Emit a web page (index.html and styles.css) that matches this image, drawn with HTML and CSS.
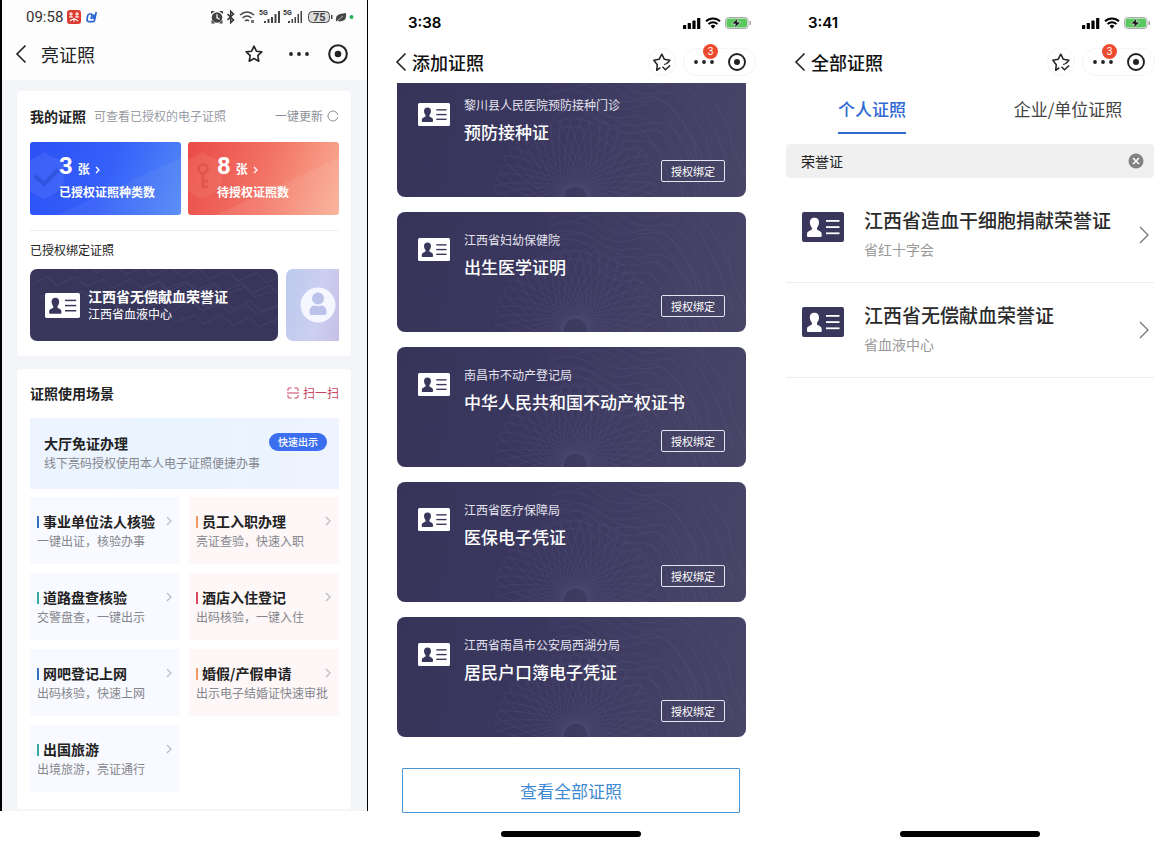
FILE: index.html
```html
<!DOCTYPE html>
<html lang="zh-CN">
<head>
<meta charset="utf-8">
<meta name="viewport" content="width=device-width, initial-scale=1">
<title>电子证照</title>
<link rel="stylesheet" href="styles.css">
</head>
<body>
<svg class="defs" aria-hidden="true">
  <symbol id="back" viewBox="0 0 12 20"><path d="M10.500 1.500 2 10l8.500 8.500" fill="none" stroke="currentColor" stroke-width="1.600"/></symbol>
  <symbol id="next" viewBox="0 0 10 18"><path d="m1 1 8 8-8 8" fill="none" stroke="currentColor" stroke-width="1.300"/></symbol>
  <symbol id="more" viewBox="0 0 6 10"><path d="m1 1 4 4-4 4" fill="none" stroke="currentColor" stroke-width="1.500"/></symbol>
  <symbol id="star" viewBox="0 0 20 20"><path d="m10 2.200 2.400 5 5.400.700-4 3.800 1 5.500-4.800-2.700-4.800 2.700 1-5.500-4-3.800 5.400-.700z" fill="none" stroke="currentColor" stroke-width="1.600" stroke-linejoin="round"/></symbol>
  <symbol id="star-check" viewBox="0 0 20 20"><path d="M8.300 15.600l-3.600 2.700.600-5.600L1.800 8.300l5.300-1L9.800 2.200l2.600 5.100 5.500 1-3 3.200" fill="none" stroke="currentColor" stroke-width="1.500" stroke-linejoin="round"/><path d="m10.500 14.800 3 3 4.600-4.300" fill="none" stroke="currentColor" stroke-width="1.500"/><path d="m12 12.500 3-1" fill="none" stroke="currentColor" stroke-width="1.200"/></symbol>
  <symbol id="dots" viewBox="0 0 20 6"><circle cx="2" cy="3" r="1.900"/><circle cx="10" cy="3" r="1.900"/><circle cx="18" cy="3" r="1.900"/></symbol>
  <symbol id="target" viewBox="0 0 20 20"><circle cx="10" cy="10" r="8" fill="none" stroke="currentColor" stroke-width="1.900"/><circle cx="10" cy="10" r="3"/></symbol>
  <symbol id="bars" viewBox="0 0 18 12"><rect x="0" y="8" width="3.200" height="4" rx=".6"/><rect x="4.700" y="6" width="3.200" height="6" rx=".6"/><rect x="9.400" y="3.500" width="3.200" height="8.500" rx=".6"/><rect x="14.100" y="1" width="3.200" height="11" rx=".6"/></symbol>
  <symbol id="wifi" viewBox="0 0 16 12"><g fill="none" stroke="currentColor" stroke-width="1.900"><path d="M1 4.300a10 10 0 0 1 14 0M3.500 7.100a6.500 6.500 0 0 1 9 0"/></g><path d="M5.600 9a3.500 3.500 0 0 1 4.800 0L8 11.800z"/></symbol>
  <symbol id="charge" viewBox="0 0 26 12"><rect x=".5" y=".5" width="22.500" height="11" rx="3" fill="#fff" stroke="#a8a8a8"/><rect x="1.500" y="1.500" width="20.500" height="9" rx="2" fill="#5bc75f"/><path d="M24.500 4v4a2 2 0 0 0 0-4z" fill="#9c9c9c"/><path d="M13 .8 6.700 6.900h3.700L9.300 11.200l6.500-6.100h-3.700z" fill="#111" stroke="#fff" stroke-width=".6"/></symbol>
  <symbol id="idcard" viewBox="0 0 42 30"><path fill="currentColor" d="M2 0h38q2 0 2 2v26q0 2-2 2H2q-2 0-2-2V2q0-2 2-2z"/><g><path d="M12.500 5.800c3 0 4.700 2 4.500 4.900-.1 2-.9 3.800-2 5v1.900c1.600 1.200 4.700 1.600 4.700 4.600V24q0 1-1 1H6q-1 0-1-1v-1.800c0-3 3.300-3.400 4.900-4.600v-1.900c-1.100-1.200-1.900-3-2-5-.2-2.900 1.600-4.900 4.600-4.900z"/><rect x="24" y="8" width="13.500" height="1.800"/><rect x="24" y="14.200" width="13.500" height="1.800"/><rect x="24" y="20.400" width="13.500" height="1.800"/></g></symbol>
  <symbol id="weave" viewBox="0 0 348 120" preserveAspectRatio="xMaxYMid slice">
    <g fill="none" stroke="#8f8cc0" stroke-width=".6" opacity=".15">
      <g id="petals"><ellipse cx="178" cy="118" rx="82" ry="12"/><ellipse cx="178" cy="118" rx="82" ry="12" transform="rotate(15 178 118)"/><ellipse cx="178" cy="118" rx="82" ry="12" transform="rotate(30 178 118)"/><ellipse cx="178" cy="118" rx="82" ry="12" transform="rotate(45 178 118)"/><ellipse cx="178" cy="118" rx="82" ry="12" transform="rotate(60 178 118)"/><ellipse cx="178" cy="118" rx="82" ry="12" transform="rotate(75 178 118)"/></g>
      <use href="#petals" transform="rotate(90 178 118)"/>
      <use href="#petals" transform="rotate(7 178 118)"/>
      <use href="#petals" transform="rotate(97 178 118)"/>
      <g id="waves"><path d="M150 8q25-14 48 3t44 8 42 22 20 38 16 42"/><path d="M150 16q25-14 46 3t42 8 38 22 18 36 14 40"/><path d="M150 24q23-12 44 3t38 10 34 20 16 34 14 36"/><path d="M150 32q23-12 42 3t34 10 30 20 14 32 12 30"/></g>
      <use href="#waves" transform="translate(28 -24)"/>
      <use href="#waves" transform="translate(10 8) rotate(4)"/>
    </g>
  </symbol>
  <symbol id="zigzag" viewBox="0 0 248 72" preserveAspectRatio="xMaxYMid slice">
    <g fill="none" stroke="#5c5a85" stroke-width="1" opacity=".3">
      <g id="zz"><path d="M4 14l14-6 8 8 20-8 10 9 18-7 9 9 18-9 12 10 16-8 10 10 18-8 11 10 18-8 10 10 18-8 11 10 18-6"/></g>
      <use href="#zz" transform="translate(6 14)"/><use href="#zz" transform="translate(60 22)"/><use href="#zz" transform="translate(90 36)"/><use href="#zz" transform="translate(40 -12)"/><use href="#zz" transform="translate(110 4)"/>
    </g>
  </symbol>
</svg>

<main class="screens">
  <section class="phone phone-wallet">
    <header class="top">
      <div class="status">
        <span class="clock">09:58</span>
        <svg class="status-app" viewBox="0 0 14 14"><rect width="14" height="14" rx="3" fill="#dc3b30"/><g fill="none" stroke="#fff" stroke-width="1.100"><path d="M2 4h4M4 2v5M2 7h4M8 4h4M10 2v5M8 7h4M3 11q4-4 8 0M7 8v4"/></g></svg>
        <svg class="status-app" viewBox="0 0 14 14"><path d="M7 4H4.500Q3 4 2.600 6L2 10q0 1.600 1.500 1.600H8q1.300 0 1.600-1.500L11.200 2M7.200 4 6 9M9 4.500 8 9" fill="none" stroke="#2a66cf" stroke-width="1.700"/></svg>
        <svg class="status-icons" viewBox="0 0 145 18">
          <g fill="#444"><circle cx="7" cy="9.500" r="5.300"/><path d="M1 6V3h4zM13 6V3H9zM1.500 15.500V12l3.500 3.500zM12.500 15.500V12L9 15.500z"/></g>
          <path d="M7 6.200v3.600l2.600 1.400" stroke="#fff" stroke-width="1.300" fill="none"/>
          <path d="m17.500 6 6 6-2.800 2.700V3.300L23.500 6l-6 6" fill="none" stroke="#333" stroke-width="1.500"/>
          <g fill="none" stroke="#444" stroke-width="1.500"><path d="M30 7q7-6 14 0M32.500 10q4.500-4 9 0M35 13q2-2 4 0"/></g><path d="M41 12v3h3v-3z" fill="#777"/>
          <text x="49" y="7" class="net">5G</text>
          <g fill="#444"><path d="M54 13h2v2h-2zM57.500 11h2v4h-2zM61 9h2v6h-2zM64.500 6h2v9h-2zM68 3h2v12h-2z"/></g>
          <text x="73" y="7" class="net">5G</text>
          <g fill="#444"><path d="M78 13h2v2h-2zM81.500 11h1.500v4h-1.500zM84.500 9H86v6h-1.500zM87.500 6H89v9h-1.500zM90.500 3H92v12h-1.500z"/></g>
          <rect x="98.500" y="3.500" width="21" height="11" rx="4" fill="#ddd" stroke="#444"/><path d="M121 7h1.500v4H121z" fill="#444"/>
          <text x="103" y="13" class="level">75</text>
          <path d="M126 14q-1-7 4-8l6-1q1 7-4 8-3 1-4.500-.5z" fill="#444"/><path d="m126 14 7-6" stroke="#ddd" stroke-width=".8"/>
          <circle cx="141.500" cy="9" r="2" fill="#25b35a"/>
        </svg>
      </div>
      <div class="nav">
        <button class="icon-btn" aria-label="返回"><svg class="i-back"><use href="#back"/></svg></button>
        <h1>亮证照</h1>
        <button class="icon-btn round" aria-label="收藏"><svg class="i-20"><use href="#star"/></svg></button>
        <div class="capsule">
          <button class="icon-btn" aria-label="更多"><svg class="i-dots"><use href="#dots"/></svg></button>
          <button class="icon-btn" aria-label="关闭"><svg class="i-target"><use href="#target"/></svg></button>
        </div>
      </div>
    </header>
    <div class="wallet">
      <section class="panel">
        <div class="panel-head">
          <h2>我的证照</h2><p>可查看已授权的电子证照</p>
          <button class="refresh">一键更新<svg viewBox="0 0 12 12"><path d="M10.800 7A5 5 0 1 1 10.800 5" fill="none" stroke="currentColor"/></svg></button>
        </div>
        <div class="stats">
          <a class="stat stat-blue" href="#">
            <svg class="stat-mark" viewBox="0 0 40 50"><path d="M14 1q12 8 20 8v19q0 12-20 20Q-6 40-6 28V9q12 0 20-8z" fill="#5b7cf8" opacity=".35"/><path d="m5 25 9 8 14-14" fill="none" stroke="#2443c9" stroke-width="4" opacity=".5"/></svg>
            <span class="stat-num"><b>3</b>张<svg viewBox="0 0 6 8"><path d="m1 1 3 3-3 3" fill="none" stroke="currentColor" stroke-width="1.300"/></svg></span>
            <span class="stat-label">已授权证照种类数</span>
          </a>
          <a class="stat stat-red" href="#">
            <svg class="stat-mark" viewBox="0 0 40 50"><path d="M14 1q12 8 20 8v19q0 12-20 20Q-6 40-6 28V9q12 0 20-8z" fill="#f58a76" opacity=".25"/><g fill="none" stroke="#c73b36" stroke-width="2.500" opacity=".35"><circle cx="15" cy="18" r="4.500"/><path d="M15 23v14M15 30h5M15 36h5"/></g></svg>
            <span class="stat-num"><b>8</b>张<svg viewBox="0 0 6 8"><path d="m1 1 3 3-3 3" fill="none" stroke="currentColor" stroke-width="1.300"/></svg></span>
            <span class="stat-label">待授权证照数</span>
          </a>
        </div>
        <h3 class="bound-title">已授权绑定证照</h3>
        <div class="bound">
          <a class="bound-card" href="#">
            <svg class="pattern"><use href="#zigzag"/></svg>
            <svg class="i-id-m on-dark" viewBox="0 0 42 30"><use href="#idcard"/></svg>
            <span class="bound-text"><strong>江西省无偿献血荣誉证</strong><span>江西省血液中心</span></span>
          </a>
          <a class="bound-next" href="#" aria-label="下一张证照">
            <svg viewBox="0 0 36 36"><circle cx="18" cy="18" r="17.500" fill="#f5f6ff"/><g fill="#bcc3ea"><circle cx="18" cy="11.500" r="6"/><path d="M9.500 25q0-6.500 5.500-6.500 3 1.500 6 0 5.500 0 5.500 6.500v1q0 2-2 2h-13q-2 0-2-2z"/></g></svg>
          </a>
        </div>
      </section>
      <section class="panel panel-scenes">
        <div class="panel-head">
          <h2>证照使用场景</h2>
          <button class="scan"><svg viewBox="0 0 12 12"><path d="M1 4V2q0-1 1-1h2.500M7.500 1H10q1 0 1 1v2M1 8v2q0 1 1 1h2.500M7.500 11H10q1 0 1-1V8M0 6h12" fill="none" stroke="currentColor"/></svg>扫一扫</button>
        </div>
        <div class="hall">
          <div><h3>大厅免证办理</h3><p>线下亮码授权使用本人电子证照便捷办事</p></div>
          <button>快速出示</button>
        </div>
        <div class="scenes">
          <a class="scene blue" href="#"><h3>事业单位法人核验</h3><svg><use href="#more"/></svg><p>一键出证，核验办事</p></a>
          <a class="scene orange" href="#"><h3>员工入职办理</h3><svg><use href="#more"/></svg><p>亮证查验，快速入职</p></a>
          <a class="scene teal" href="#"><h3>道路盘查核验</h3><svg><use href="#more"/></svg><p>交警盘查，一键出示</p></a>
          <a class="scene red" href="#"><h3>酒店入住登记</h3><svg><use href="#more"/></svg><p>出码核验，一键入住</p></a>
          <a class="scene blue" href="#"><h3>网吧登记上网</h3><svg><use href="#more"/></svg><p>出码核验，快速上网</p></a>
          <a class="scene orange" href="#"><h3>婚假/产假申请</h3><svg><use href="#more"/></svg><p>出示电子结婚证快速审批</p></a>
          <a class="scene teal" href="#"><h3>出国旅游</h3><svg><use href="#more"/></svg><p>出境旅游，亮证通行</p></a>
        </div>
      </section>
    </div>
  </section>

  <section class="phone phone-add">
    <div class="status ios"><span class="clock">3:38</span><svg class="i-bars"><use href="#bars"/></svg><svg class="i-wifi"><use href="#wifi"/></svg><svg class="i-charge"><use href="#charge"/></svg></div>
    <div class="nav ios">
      <button class="icon-btn" aria-label="返回"><svg class="i-back"><use href="#back"/></svg></button>
      <h1>添加证照</h1>
      <button class="icon-btn round" aria-label="收藏"><svg class="i-20"><use href="#star-check"/></svg></button>
      <div class="capsule">
        <button class="icon-btn" aria-label="更多"><svg class="i-dots"><use href="#dots"/></svg><span class="badge">3</span></button>
        <button class="icon-btn" aria-label="关闭"><svg class="i-target"><use href="#target"/></svg></button>
      </div>
    </div>
    <div class="certs">
      <article class="cert cert-first"><svg class="pattern"><use href="#weave"/></svg><svg class="i-id-s on-dark" viewBox="0 0 42 30"><use href="#idcard"/></svg><div class="cert-text"><p>黎川县人民医院预防接种门诊</p><h2>预防接种证</h2></div><button>授权绑定</button></article>
      <article class="cert"><svg class="pattern"><use href="#weave"/></svg><svg class="i-id-s on-dark" viewBox="0 0 42 30"><use href="#idcard"/></svg><div class="cert-text"><p>江西省妇幼保健院</p><h2>出生医学证明</h2></div><button>授权绑定</button></article>
      <article class="cert"><svg class="pattern"><use href="#weave"/></svg><svg class="i-id-s on-dark" viewBox="0 0 42 30"><use href="#idcard"/></svg><div class="cert-text"><p>南昌市不动产登记局</p><h2>中华人民共和国不动产权证书</h2></div><button>授权绑定</button></article>
      <article class="cert"><svg class="pattern"><use href="#weave"/></svg><svg class="i-id-s on-dark" viewBox="0 0 42 30"><use href="#idcard"/></svg><div class="cert-text"><p>江西省医疗保障局</p><h2>医保电子凭证</h2></div><button>授权绑定</button></article>
      <article class="cert"><svg class="pattern"><use href="#weave"/></svg><svg class="i-id-s on-dark" viewBox="0 0 42 30"><use href="#idcard"/></svg><div class="cert-text"><p>江西省南昌市公安局西湖分局</p><h2>居民户口簿电子凭证</h2></div><button>授权绑定</button></article>
    </div>
    <button class="view-all">查看全部证照</button>
    <div class="home-bar"></div>
  </section>

  <section class="phone phone-all">
    <div class="status ios"><span class="clock">3:41</span><svg class="i-bars"><use href="#bars"/></svg><svg class="i-wifi"><use href="#wifi"/></svg><svg class="i-charge"><use href="#charge"/></svg></div>
    <div class="nav ios">
      <button class="icon-btn" aria-label="返回"><svg class="i-back"><use href="#back"/></svg></button>
      <h1>全部证照</h1>
      <button class="icon-btn round" aria-label="收藏"><svg class="i-20"><use href="#star-check"/></svg></button>
      <div class="capsule">
        <button class="icon-btn" aria-label="更多"><svg class="i-dots"><use href="#dots"/></svg><span class="badge">3</span></button>
        <button class="icon-btn" aria-label="关闭"><svg class="i-target"><use href="#target"/></svg></button>
      </div>
    </div>
    <div class="tabs"><button class="active">个人证照</button><button>企业/单位证照</button></div>
    <div class="search">
      <input type="text" value="荣誉证" aria-label="搜索证照">
      <button class="icon-btn" aria-label="清除"><svg viewBox="0 0 16 16"><circle cx="8" cy="8" r="7.500" fill="#828282"/><path d="m5 5 6 6M11 5l-6 6" stroke="#fff" stroke-width="1.500"/></svg></button>
    </div>
    <div class="results">
      <a class="result" href="#"><svg class="i-id-l on-light" viewBox="0 0 42 30"><use href="#idcard"/></svg><span class="result-text"><strong>江西省造血干细胞捐献荣誉证</strong><span>省红十字会</span></span><svg class="i-next"><use href="#next"/></svg></a>
      <a class="result" href="#"><svg class="i-id-l on-light" viewBox="0 0 42 30"><use href="#idcard"/></svg><span class="result-text"><strong>江西省无偿献血荣誉证</strong><span>省血液中心</span></span><svg class="i-next"><use href="#next"/></svg></a>
    </div>
    <div class="home-bar"></div>
  </section>
</main>
</body>
</html>
```

FILE: styles.css
```css
* { box-sizing: border-box; }
body, h1, h2, h3, p { margin: 0; }
body {
  background: #fff;
  color: #222;
  font-family: "Noto Sans CJK SC", sans-serif;
  font-size: 12px;
  line-height: 20px;
}
a { color: inherit; text-decoration: none; }
button {
  border: 0;
  padding: 0;
  background: none;
  color: inherit;
  font: inherit;
  white-space: nowrap;
  cursor: pointer;
}
svg { display: block; flex: none; fill: currentColor; }
.defs { position: absolute; width: 0; height: 0; }

.screens {
  display: grid;
  grid-template-columns: 368fr 406fr 392fr;
  align-items: start;
}
.phone { min-width: 0; }
.phone-add, .phone-all {
  display: flex;
  flex-direction: column;
  min-height: 100vh;
  padding-bottom: 8px;
}

/* Icons */
.icon-btn { display: flex; align-items: center; justify-content: center; }
.i-back { width: 12px; height: 20px; }
.i-20 { width: 20px; height: 20px; }
.i-dots { width: 20px; height: 6px; }
.i-target { width: 20px; height: 20px; }
.i-bars { width: 18px; height: 12px; }
.i-wifi { width: 16px; height: 12px; }
.i-charge { width: 26px; height: 12px; }
.i-next { width: 10px; height: 18px; color: #777; }
.i-id-s { width: 32px; height: 23px; }
.i-id-m { width: 35px; height: 25px; }
.i-id-l { width: 42px; height: 30px; }
.on-dark { color: #fff; }
.on-dark use { fill: #3a375c; }
.on-light { color: #3a375c; }
.on-light use { fill: #fff; }
.pattern { position: absolute; inset: 0; width: 100%; height: 100%; }

/* Status bar and title bar */
.status { display: flex; align-items: center; height: 34px; padding: 0 12px 0 24px; }
.clock { font: 15px/20px Roboto, sans-serif; color: #333; }
.status-app { width: 14px; height: 14px; margin-left: 4px; }
.status-icons { width: 145px; height: 18px; margin-left: auto; }
.net { font: 700 7px Roboto, sans-serif; fill: #333; }
.level { font: 700 11px Roboto, sans-serif; fill: #444; }
.status.ios { gap: 4px; height: 46px; color: #000; }
.status.ios .clock { margin-right: auto; font: 600 15px/20px Inter, sans-serif; color: #000; }
.phone-add .status { padding: 0 23px 0 40px; }
.phone-all .status { padding: 0 16px 0 34px; }

.nav { display: flex; align-items: center; height: 40px; padding: 0 13px; color: #222; }
.nav h1 { margin-left: 14px; margin-right: auto; font-size: 18px; font-weight: 400; line-height: 26px; }
.capsule { display: flex; align-items: center; }
.round { width: 28px; height: 28px; border-radius: 14px; }
.phone-wallet .round { margin-right: 21px; }
.phone-wallet .capsule { gap: 18px; padding-right: 5px; }
.phone-wallet .i-target { width: 22px; height: 22px; }
.nav.ios { height: 32px; margin-bottom: 5px; }
.nav.ios h1 { margin-left: 5px; font-weight: 500; color: #111; }
.phone-add .nav { padding: 0 18px 0 27px; }
.phone-all .nav { padding: 0 11px 0 20px; }
.nav.ios .round { margin-right: 7px; border: 1px solid #f5f5f5; }
.nav.ios .capsule {
  justify-content: space-between;
  width: 73px;
  height: 28px;
  padding: 0 8px 0 10px;
  border: 1px solid #f5f5f5;
  border-radius: 14px;
}
.nav.ios .capsule .icon-btn { position: relative; }
.badge {
  position: absolute;
  left: 9px;
  bottom: 6px;
  width: 15px;
  height: 15px;
  border-radius: 8px;
  background: #ed4b2f;
  color: #fff;
  font: 10px/15px "Liberation Sans", sans-serif;
  text-align: center;
}
.home-bar { width: 140px; height: 6px; margin: auto auto 0; border-radius: 3px; background: #000; }

/* Wallet screen */
.phone-wallet { border: solid #000; border-width: 0 1px 0 2px; background: #f4f5f9; }
.top { padding-bottom: 6px; background: #fdfdfe; }
.wallet { display: grid; gap: 13px; padding: 11px 16px 2px 15px; }
.panel { min-width: 0; padding: 15px 12px 15px 13px; border-radius: 4px; background: #fff; }
.panel-head { display: flex; align-items: center; }
.panel-head h2 { font-size: 14px; font-weight: 700; line-height: 20px; white-space: nowrap; }
.panel-head p { margin-left: 8px; color: #9a9ca6; white-space: nowrap; }
.panel-head button { display: flex; align-items: center; gap: 4px; margin-left: auto; }
.panel-head svg { width: 12px; height: 12px; }
.refresh { color: #8c8e99; }
.scan { color: #c9405e; }
.stats { display: grid; grid-template-columns: 1fr 1fr; gap: 7px; margin-top: 16px; padding-bottom: 15px; border-bottom: 1px solid #ededf0; }
.stat {
  position: relative;
  display: grid;
  gap: 4px;
  padding: 12px 0 13px 29px;
  border-radius: 3px;
  color: #fff;
  overflow: hidden;
}
.stat-blue { background: linear-gradient(155deg, transparent 60%, #ffffff0c 60%), linear-gradient(110deg, #2b50f5, #3560fa 50%, #548af5); }
.stat-red { background: linear-gradient(155deg, transparent 60%, #ffffff12 60%), linear-gradient(110deg, #ea4a48, #f27365 50%, #fab196); }
.stat-mark { position: absolute; left: 0; top: 9px; width: 40px; height: 50px; }
.stat-num { position: relative; display: flex; align-items: baseline; gap: 5px; height: 24px; font-weight: 700; line-height: 24px; }
.stat-num b { font: 700 24px/24px Roboto, sans-serif; }
.stat-num svg { width: 6px; height: 8px; }
.stat-label { position: relative; font-weight: 700; white-space: nowrap; }
.bound-title { margin-top: 9px; font-size: 12px; font-weight: 400; }
.bound { display: flex; gap: 8px; margin-top: 9px; }
.bound-card {
  position: relative;
  display: flex;
  align-items: center;
  flex: 248;
  gap: 8px;
  height: 72px;
  padding-left: 15px;
  border-radius: 7px;
  background: #3a375c;
  color: #fff;
  overflow: hidden;
}
.bound-card .i-id-m { position: relative; }
.bound-text { position: relative; display: grid; line-height: 17px; white-space: nowrap; }
.bound-text strong { font-size: 14px; font-weight: 700; }
.bound-next {
  display: flex;
  align-items: center;
  justify-content: flex-end;
  flex: 53;
  padding-right: 3px;
  border-radius: 7px 0 0 7px;
  background: linear-gradient(100deg, #bccaee, #cccff0 60%, #c6c0e6);
}
.bound-next svg { width: 36px; height: 36px; }
.panel-scenes { padding-top: 14px; padding-bottom: 17px; }
.hall {
  display: flex;
  justify-content: space-between;
  align-items: start;
  margin: 15px 0 8px;
  padding: 15px 12px 16px 14px;
  background: linear-gradient(90deg, #edf4ff, #e9f4ff 50%, #eef3ff);
}
.hall h3, .scene h3 { font-size: 14px; font-weight: 700; line-height: 20px; white-space: nowrap; }
.hall div { width: 0; white-space: nowrap; }
.hall p, .scene p { color: #85868d; }
.hall button { padding: 0 9px; border-radius: 9px; background: #3c6ff0; color: #fff; font-size: 10px; font-weight: 500; line-height: 18px; }
.scenes { display: grid; grid-template-columns: 1fr 1fr; gap: 9px; }
.scene {
  display: grid;
  grid-template-columns: 1fr auto;
  align-items: center;
  padding: 14px 8px 13px 7px;
  background: #f8faff;
}
.scene h3::before { content: ""; display: inline-block; width: 2px; height: 12px; margin-right: 4px; background: currentColor; vertical-align: -1px; }
.scene svg { width: 6px; height: 10px; color: #c2c3c9; }
.scene p { grid-column: 1 / -1; white-space: nowrap; }
.blue h3::before { background: #3571b8; }
.teal h3::before { background: #35aaa5; }
.orange h3::before { background: #f19a63; }
.red h3::before { background: #dc4a62; }
.orange, .red { background: #fdf7f7; }

/* Add-certificate screen */
.certs { display: grid; gap: 15px; padding: 0 28px 0 29px; }
.cert {
  position: relative;
  display: flex;
  align-items: start;
  padding: 18px 21px 15px;
  border-radius: 8px;
  background: linear-gradient(100deg, #37345a, #3c3960 45%, #494768);
  color: #fff;
  overflow: hidden;
}
.cert-first { padding-top: 12px; border-radius: 0 0 8px 8px; }
.cert .i-id-s { position: relative; margin: 8px 14px 0 0; }
.cert-text { position: relative; flex: 1; padding-bottom: 37px; white-space: nowrap; width: 0; }
.cert-text p { color: #e4e3ee; }
.cert-text h2 { margin-top: 4px; font-size: 17px; font-weight: 500; line-height: 26px; }
.cert button {
  position: relative;
  align-self: end;
  padding: 0 9px;
  border: 1px solid #e4e3ee;
  border-radius: 2px;
  font-size: 11px;
}
.view-all {
  margin: 31px 34px 12px;
  border: 1px solid #4a94d8;
  border-radius: 1px;
  color: #3f8ad2;
  font-size: 17px;
  line-height: 43px;
}

/* All-certificates screen */
.tabs { display: grid; grid-template-columns: 1fr 1fr; justify-items: center; }
.tabs button { padding: 15px 0 12px; border-bottom: 2px solid transparent; color: #444; font-size: 17px; line-height: 22px; }
.tabs .active { border-color: #2f69d2; color: #2f69d2; font-weight: 500; }
.search { display: flex; align-items: center; height: 34px; margin: 10px 12px; padding: 0 10px 0 15px; border-radius: 4px; background: #f0f0f0; }
.search input { flex: 1; min-width: 0; padding: 0; border: 0; outline: 0; background: none; color: #222; font: inherit; font-size: 14px; }
.search svg { width: 16px; height: 16px; }
.results { padding: 0 12px; }
.result { display: flex; align-items: center; padding: 19px 5px 23px 16px; border-bottom: 1px solid #ececec; }
.result .i-id-l { align-self: start; margin: 5px 20px 0 0; }
.result .i-next { margin-top: 4px; }
.result-text { display: grid; gap: 6px; flex: 1; white-space: nowrap; }
.result-text strong { color: #2b2b2b; font-size: 19px; font-weight: 500; line-height: 26px; }
.result-text span { color: #999; font-size: 14px; }
```
